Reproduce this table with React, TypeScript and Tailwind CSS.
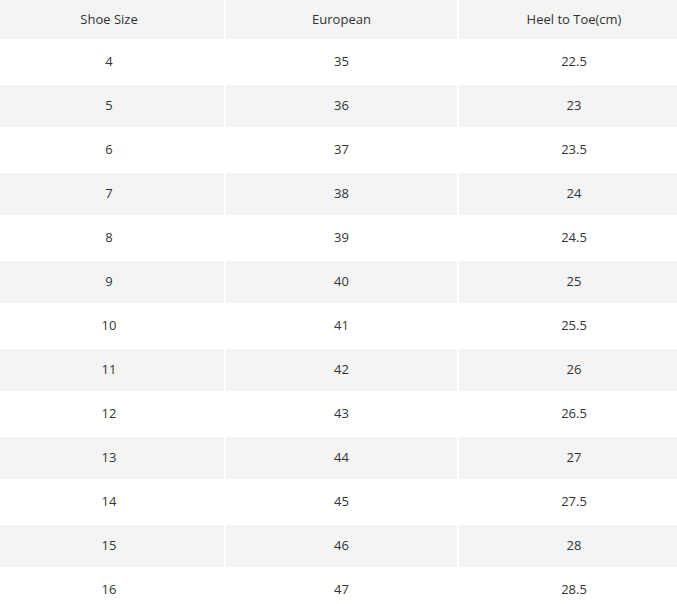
const rows: [string, string, string][] = [
  ["4", "35", "22.5"],
  ["5", "36", "23"],
  ["6", "37", "23.5"],
  ["7", "38", "24"],
  ["8", "39", "24.5"],
  ["9", "40", "25"],
  ["10", "41", "25.5"],
  ["11", "42", "26"],
  ["12", "43", "26.5"],
  ["13", "44", "27"],
  ["14", "45", "27.5"],
  ["15", "46", "28"],
  ["16", "47", "28.5"],
];

const headers = ["Shoe Size", "European", "Heel to Toe(cm)"];

export default function App() {
  return (
    <div className="h-[604px] w-[677px] overflow-hidden bg-white font-['Open_Sans',sans-serif] text-[13px] text-[#333]">
      <div className="-ml-[6px] grid w-[695px] grid-cols-[230px_231px_230px] gap-[2px]">
        {headers.map((h) => (
          <div key={h} className="flex h-[39px] items-center justify-center bg-[#f4f4f4]">
            {h}
          </div>
        ))}
        {rows.map((row, i) =>
          row.map((cell, j) => (
            <div
              key={`${i}-${j}`}
              className={
                i % 2 === 1
                  ? "flex h-[42px] items-center justify-center bg-[#f4f4f4]"
                  : "flex h-[42px] items-center justify-center bg-white"
              }
            >
              {cell}
            </div>
          ))
        )}
      </div>
    </div>
  );
}
